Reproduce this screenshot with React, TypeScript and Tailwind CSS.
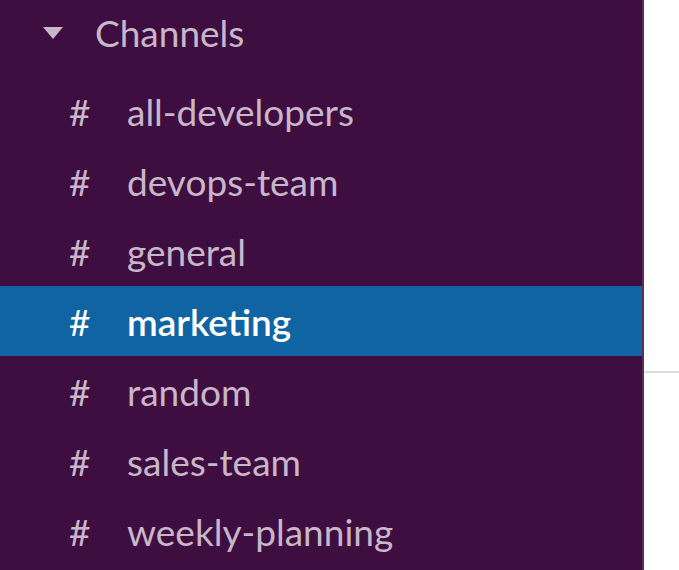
import React from 'react';

const channels = [
  'all-developers',
  'devops-team',
  'general',
  'marketing',
  'random',
  'sales-team',
  'weekly-planning',
];

const active = 'marketing';

const ChannelRow: React.FC<{ name: string; selected: boolean }> = ({
  name,
  selected,
}) => (
  <div
    className={`flex items-center h-[70px] pl-[69px] ${
      selected ? 'bg-[#1164a3] text-white' : 'text-[#c8b6c9]'
    }`}
  >
    <span className="w-[58px] font-normal">#</span>
    <span className={selected ? 'font-semibold' : ''}>{name}</span>
  </div>
);

const App: React.FC = () => (
  <div
    className="flex w-[679px] h-[570px] overflow-hidden bg-white"
    style={{ fontFamily: 'Lato, "Open Sans", sans-serif' }}
  >
    <div className="w-[644px] shrink-0 h-full bg-[#3f0e40] border-r-2 border-[#5a2f5b] text-[37px] leading-none">
      <div className="flex items-center h-[76px] pb-[11px] text-[#c8b6c9]">
        <svg
          width="20"
          height="12"
          viewBox="0 0 20 12"
          className="ml-[43px] mr-[32px]"
        >
          <path d="M0 0 H20 L10 12 Z" fill="#c8b6c9" />
        </svg>
        <span>Channels</span>
      </div>
      {channels.map((c) => (
        <ChannelRow key={c} name={c} selected={c === active} />
      ))}
    </div>
    <div className="flex-1 flex flex-col">
      <div className="h-[371px]" />
      <div className="h-[2px] bg-[#dddddd]" />
    </div>
  </div>
);

export default App;
